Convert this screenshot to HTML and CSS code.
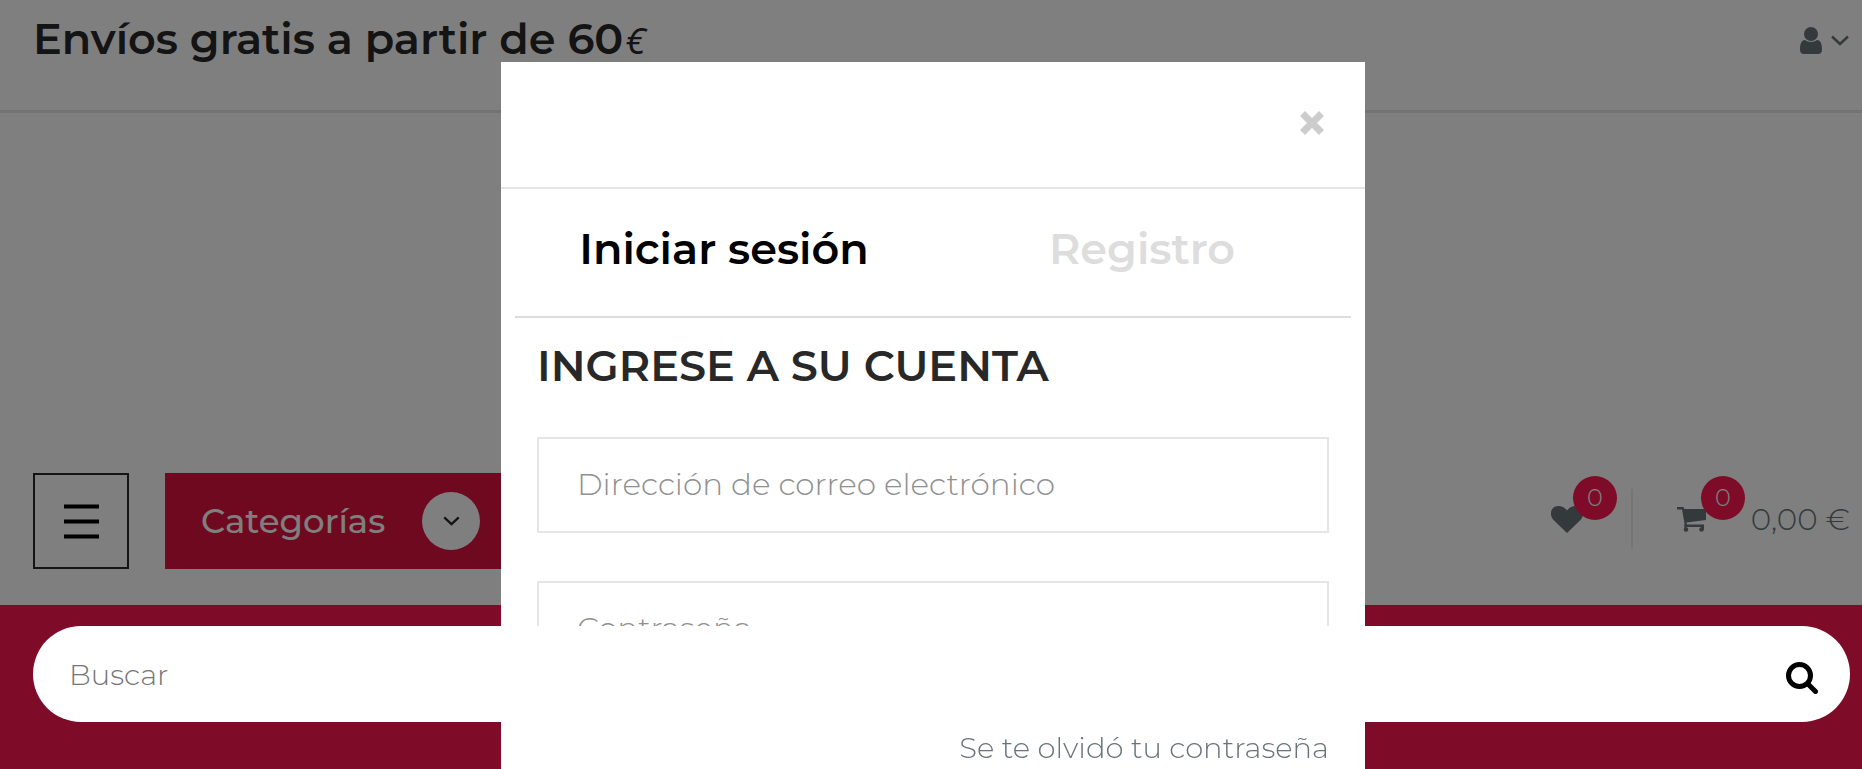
FILE: index.html
```html
<!DOCTYPE html>
<html lang="es">
<head>
<meta charset="utf-8">
<title>Iniciar sesión</title>
<meta name="viewport" content="width=device-width, initial-scale=1">
<link rel="stylesheet" href="styles.css">
</head>
<body>
<div class="page">
  <header class="topbar">
    <p class="shipping">Envíos gratis a partir de 60<em class="euro">€</em></p>
    <button class="account" type="button" aria-label="Mi cuenta">
      <svg class="icon-user" viewBox="0 0 22 27" aria-hidden="true"><circle cx="11" cy="7" r="7"/><path d="M5 13C1.500 13 0 17 0 22.500C0 25.500 1.500 27 4 27H18C20.500 27 22 25.500 22 22.500C22 17 20.500 13 17 13C15.500 14 13.500 15 11 15C8.500 15 6.500 14 5 13Z"/></svg>
      <svg class="icon-down" viewBox="0 0 18 11" aria-hidden="true"><path d="M1 1.500L9 9L17 1.500"/></svg>
    </button>
  </header>

  <nav class="mainbar">
    <button class="menu" type="button" aria-label="Menú">
      <svg class="icon-menu" viewBox="0 0 35 35" aria-hidden="true"><path d="M0 2.500H35M0 17.500H35M0 32.500H35"/></svg>
    </button>
    <button class="categories" type="button">
      <span>Categorías</span>
      <span class="circle"><svg class="icon-down-small" viewBox="0 0 18 11" aria-hidden="true"><path d="M1 1.500L9 9L17 1.500"/></svg></span>
    </button>
    <div class="tools">
      <a class="wishlist" href="#" aria-label="Lista de deseos">
        <svg class="icon-heart" viewBox="0 0 32 27" aria-hidden="true"><path d="M16 27L2.500 14C-1 10.500-.8 5 2 2C5-1 12-1 16 4.500C20-1 27-1 30 2C32.800 5 33 10.500 29.500 14Z"/></svg>
        <span class="badge">0</span>
      </a>
      <a class="cart" href="#">
        <svg class="icon-cart" viewBox="0 0 30 25" aria-hidden="true"><path d="M0 0H6.500L7.300 2H29V13L9.500 15.500L10 17.500H27V20H7.500V16.500L5 2.500H0Z"/><circle cx="9" cy="22.500" r="2.300"/><circle cx="24.500" cy="22.500" r="2.300"/><path d="M7.500 17H9.500V23H7.500ZM24 18H27V23H24Z"/></svg>
        <span class="badge">0</span>
        <span class="total">0,00 €</span>
      </a>
    </div>
  </nav>

  <div class="searchbar">
    <form class="search" role="search">
      <input class="search-input" type="text" placeholder="Buscar" aria-label="Buscar">
      <button class="search-button" type="button" aria-label="Buscar">
        <svg class="icon-search" viewBox="0 0 32 32" aria-hidden="true"><circle cx="13.500" cy="13.500" r="11"/><path d="M22 22L29.500 29.500"/></svg>
      </button>
    </form>
  </div>
</div>

<div class="backdrop">
  <section class="modal" role="dialog" aria-label="Iniciar sesión">
    <div class="modal-head">
      <button class="close" type="button" aria-label="Cerrar">
        <svg class="icon-close" viewBox="0 0 24 24" aria-hidden="true"><path d="M2.500 2.500L21.500 21.500M21.500 2.500L2.500 21.500"/></svg>
      </button>
    </div>
    <div class="tabs" role="tablist">
      <button class="tab tab-active" type="button" role="tab" aria-selected="true">Iniciar sesión</button>
      <button class="tab" type="button" role="tab" aria-selected="false">Registro</button>
    </div>
    <form class="login">
      <h2 class="login-title">INGRESE A SU CUENTA</h2>
      <input class="field" type="email" placeholder="Dirección de correo electrónico" aria-label="Dirección de correo electrónico">
      <input class="field" type="password" placeholder="Contraseña" aria-label="Contraseña">
      <a class="forgot" href="#">Se te olvidó tu contraseña</a>
    </form>
  </section>
</div>
</body>
</html>
```

FILE: styles.css
```css
* { box-sizing: border-box; }

body {
  margin: 0;
  overflow: hidden;
  font-family: Montserrat, Inter, "Open Sans", sans-serif;
  font-weight: 300;
  color: #687479;
  background: #fff;
}

button, input { font: inherit; color: inherit; }

button {
  padding: 0;
  border: 0;
  background: none;
  cursor: pointer;
}

a { color: inherit; text-decoration: none; }

svg { display: block; fill: currentColor; }

.page {
  display: flex;
  flex-direction: column;
  min-height: 100vh;
}

.topbar {
  display: flex;
  justify-content: space-between;
  align-items: flex-start;
  padding: 12px 13px 42px 33px;
  border-bottom: 3px solid #e6e6e6;
}

.shipping {
  margin: 0;
  font-size: 43px;
  font-weight: 600;
  line-height: 54px;
  color: #282828;
}

.euro {
  margin-left: 2px;
  font-family: "Open Sans", sans-serif;
  font-size: 37px;
  font-weight: 500;
  line-height: 1;
}

.account {
  display: flex;
  align-items: center;
  gap: 9px;
  height: 56px;
}

.icon-user { width: 22px; height: 27px; }

.icon-down {
  width: 18px;
  height: 11px;
  fill: none;
  stroke: currentColor;
  stroke-width: 2.5;
}

.mainbar {
  display: flex;
  align-items: center;
  gap: 36px;
  padding: 360px 12px 36px 33px;
}

.menu {
  display: grid;
  place-items: center;
  width: 96px;
  height: 96px;
  border: 2px solid #282828;
  color: #000;
}

.icon-menu { width: 35px; height: 35px; stroke: currentColor; stroke-width: 4; }

.categories {
  display: flex;
  justify-content: space-between;
  align-items: center;
  width: 500px;
  height: 96px;
  padding: 0 185px 0 36px;
  background: #dc1240;
  color: #fff;
  font-size: 34px;
  font-weight: 500;
}

.circle {
  display: grid;
  place-items: center;
  width: 58px;
  height: 58px;
  border-radius: 50%;
  background: #fff;
  color: #282828;
}

.icon-down-small {
  width: 17px;
  height: 10px;
  fill: none;
  stroke: currentColor;
  stroke-width: 2.5;
}

.tools {
  display: flex;
  align-items: center;
  margin-left: auto;
  padding-bottom: 4px;
}

.wishlist, .cart {
  position: relative;
  display: flex;
  align-items: center;
  height: 60px;
}

.wishlist {
  padding-right: 48px;
  border-right: 2px solid #ebebeb;
}

.cart { padding-left: 44px; }

.icon-heart { width: 32px; height: 27px; }
.icon-cart { width: 30px; height: 25px; }

.badge {
  position: absolute;
  top: -13px;
  width: 44px;
  height: 44px;
  border-radius: 50%;
  background: #fc1850;
  color: #fff;
  font-size: 24px;
  line-height: 44px;
  text-align: center;
}

.wishlist .badge { left: 22px; }
.cart .badge { left: 68px; }

.total {
  margin-left: 44px;
  font-size: 31px;
}

.searchbar {
  flex: 1;
  padding: 21px 12px 47px 33px;
  background: #fc1850;
}

.search {
  position: relative;
  z-index: 30;
  display: flex;
  align-items: center;
  height: 96px;
  padding: 0 32px 0 36px;
  border-radius: 48px;
  background: #fff;
}

.search-input {
  flex: 1;
  min-width: 0;
  padding: 0;
  border: 0;
  outline: 0;
  background: none;
  font-size: 29px;
}

.search-input::placeholder { color: #757575; }

.search-button { color: #000; padding-top: 8px; }

.icon-search {
  width: 32px;
  height: 32px;
  fill: none;
  stroke: currentColor;
  stroke-width: 5;
  stroke-linecap: round;
}

.backdrop {
  position: fixed;
  inset: 0;
  z-index: 20;
  display: flex;
  justify-content: center;
  padding: 62px 0 0 4px;
  background: rgba(0, 0, 0, 0.5);
}

.modal {
  width: 100%;
  max-width: 864px;
  background: #fff;
}

.modal-head {
  display: flex;
  justify-content: flex-end;
  padding: 49px 41px 52px;
  border-bottom: 2px solid #e5e5e5;
}

.close { color: #ccc; }

.icon-close { width: 24px; height: 24px; stroke: currentColor; stroke-width: 7; }

.tabs {
  display: grid;
  grid-template-columns: 1fr 1fr;
  margin: 0 14px;
  padding: 32px 0 39px;
  border-bottom: 2px solid #ddd;
}

.tab {
  font-size: 43px;
  font-weight: 600;
  line-height: 56px;
  color: #ddd;
}

.tab-active { color: #000; }

.login {
  display: flex;
  flex-direction: column;
  gap: 48px;
  padding: 24px 36px 48px;
}

.login-title {
  margin: 0;
  font-size: 43px;
  font-weight: 600;
  line-height: 47px;
  color: #282828;
}

.field {
  height: 96px;
  padding: 0 38px 2px;
  border: 2px solid #e5e5e5;
  outline: 0;
  background: #fff;
  font-size: 31px;
}

.field::placeholder { color: #909090; }

.forgot {
  align-self: flex-end;
  font-size: 29px;
  line-height: 46px;
}
```
